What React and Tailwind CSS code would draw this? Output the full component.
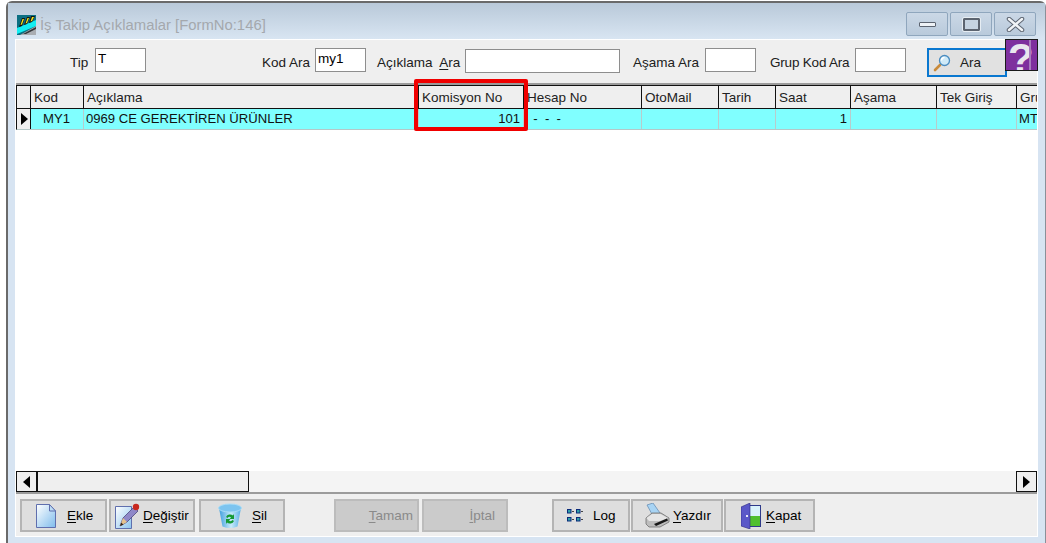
const F = { fontFamily: '"Liberation Sans", sans-serif' };

const cols = [
  ['Kod', 'w-[53px]', 'MY1', 'text-center'],
  ['Açıklama', 'w-[335px]', '0969 CE GEREKTİREN ÜRÜNLER', ''],
  ['Komisyon No', 'w-[105px]', '101', 'text-right'],
  ['Hesap No', 'w-[118px]', '  -  -  -', ''],
  ['OtoMail', 'w-[77px]', '', ''],
  ['Tarih', 'w-[57px]', '', ''],
  ['Saat', 'w-[75px]', '1', 'text-right'],
  ['Aşama', 'w-[86px]', '', ''],
  ['Tek Giriş', 'w-[80px]', '', ''],
  ['Grup', 'w-[60px]', 'MTX', ''],
];

function U({ children }) {
  return <span className="underline underline-offset-2">{children}</span>;
}

function Label({ w, ml, children, cls = '' }) {
  return <span className={`mt-[5px] whitespace-pre leading-[20px] ${w} ${ml} ${cls}`}>{children}</span>;
}

function Field({ w, value, cls = '' }) {
  return (
    <div className={`h-[24px] shrink-0 border border-[#8e8e8e] bg-white pl-[2px] pt-[1px] text-[13.5px] leading-[17px] text-black ${w} ${cls}`}>
      {value}
    </div>
  );
}

function Logo() {
  return (
    <svg width="19" height="20" viewBox="0 0 19 20" className="ml-[1px] mr-[4px] mt-[3px] shrink-0">
      <rect width="19" height="20" fill="#0b6f82" />
      <path d="M0 13 19 5v6L0 19z" fill="#12eef2" />
      <path d="M3 20 19 11v9z" fill="#a9adb2" />
      <path d="M6 19 19 12v2L9 19z" fill="#33363a" />
      <path d="M2 12 5 3h3l-3 8zM7 10l3-8h3l-3 7zM12 8l2-7h4l-3 6z" fill="#141414" />
      <path d="M3.500 10 5.500 4h1.500l-2 5.500zM8.500 8.500 10.500 3H12l-2 5zM13.500 6.500 15 2h2l-2 4z" fill="#f6e81a" />
    </svg>
  );
}

function Mag() {
  return (
    <svg width="18" height="18" viewBox="0 0 18 18" className="shrink-0">
      <path d="M2 16 7 11" stroke="#c98a3a" strokeWidth="2.600" strokeLinecap="round" />
      <circle cx="11.500" cy="6.500" r="5" fill="#cfeaf8" stroke="#4a8cc0" strokeWidth="1.300" />
      <path d="M8.500 6.500a3 3 0 0 1 3-3" stroke="#fff" strokeWidth="1.500" fill="none" />
    </svg>
  );
}

function Page() {
  return (
    <svg width="20" height="24" viewBox="0 0 20 24" className="shrink-0">
      <defs>
        <linearGradient id="pg" x1="0" y1="0" x2="1" y2="1">
          <stop offset="0" stopColor="#ffffff" />
          <stop offset="1" stopColor="#7fbcec" />
        </linearGradient>
      </defs>
      <path d="M.5.500h13l6 6.500v16.500H.5z" fill="url(#pg)" stroke="#5f6fae" />
      <path d="M13.500.500v6.500h6z" fill="#bcdcf5" stroke="#5f6fae" />
    </svg>
  );
}

function Edit() {
  return (
    <svg width="25" height="26" viewBox="0 0 25 26" className="shrink-0">
      <defs>
        <linearGradient id="ed" x1="0" y1="0" x2="1" y2="1">
          <stop offset="0" stopColor="#ffffff" />
          <stop offset="1" stopColor="#8cc4ee" />
        </linearGradient>
      </defs>
      <path d="M.5 3.500h16v22H.5z" fill="url(#ed)" stroke="#5f6fae" />
      <path d="M5 23 8 15 19 4l4 4-11 11z" fill="#8f88c8" stroke="#3f3a70" strokeWidth=".7" />
      <path d="M5 23 8 15l4 4z" fill="#e6c28c" />
      <path d="M5 23 6.300 19.500 8.500 21.700z" fill="#3a2a1a" />
      <circle cx="21" cy="4" r="3.200" fill="#c8281e" />
    </svg>
  );
}

function Bin() {
  return (
    <svg width="24" height="26" viewBox="0 0 24 26" className="shrink-0">
      <defs>
        <linearGradient id="bn" x1="0" y1="0" x2="1" y2="0">
          <stop offset="0" stopColor="#3e9ede" />
          <stop offset=".55" stopColor="#c8eafa" />
          <stop offset="1" stopColor="#5ab0e6" />
        </linearGradient>
      </defs>
      <path d="M1 5 4.500 23.500Q12 26.500 19.500 23.500L23 5z" fill="url(#bn)" />
      <ellipse cx="12" cy="5" rx="11.500" ry="4" fill="#7cc4ef" stroke="#a9dcf6" />
      <path d="M8 14a4.500 4.500 0 0 1 7-1.500l1-1.500v5h-4.500l1.500-1.500a2.500 2.500 0 0 0-3.500.5zM16 18a4.500 4.500 0 0 1-7 1.500l-1 1.500v-5h4.500l-1.500 1.500a2.500 2.500 0 0 0 3.500-.5z" fill="#159a35" />
    </svg>
  );
}

function LogIcon() {
  return (
    <svg width="16" height="13" viewBox="0 0 16 13" className="shrink-0">
      {[[0, 0], [9, 0], [0, 8], [9, 8]].map(([x, y], i) => (
        <g key={i}>
          <rect x={x + 0.5} y={y + 0.5} width="3.500" height="3.500" fill="#2fa0a8" stroke="#0a2a7a" />
          <rect x={x + 5} y={y + 2} width="2" height="1" fill="#444" />
        </g>
      ))}
    </svg>
  );
}

function Printer() {
  return (
    <svg width="25" height="25" viewBox="0 0 25 25" className="shrink-0">
      <path d="M2 2 8 0 15 10 8 13z" fill="#a8d4f4" stroke="#6a8fb5" strokeWidth=".8" />
      <path d="M1 15 7 10h9l8 5v4l-9 5H4l-3-3z" fill="#bdbdbd" stroke="#6e6e6e" strokeWidth=".8" />
      <path d="M1.500 15 7 11h8.500l7.500 4-8 3H4z" fill="#e6e6e6" />
      <path d="M9 21 22 15.500l1 2L11 23z" fill="#181818" />
    </svg>
  );
}

function Door() {
  return (
    <svg width="20" height="26" viewBox="0 0 20 26" className="shrink-0">
      <rect x="7.500" y="2.500" width="12" height="21" fill="#d9f2fb" stroke="#2e3a8a" />
      <rect x="9" y="13" width="10" height="10" fill="#4fbf2e" />
      <path d="M0 4 9 0v26l-9-3z" fill="#5a58c8" stroke="#2e2a80" strokeWidth=".6" />
      <rect x="5" y="12" width="2" height="2" fill="#e8e8f8" />
    </svg>
  );
}

function Btn({ w, icon, children, cls = '', disabled }) {
  return (
    <div
      className={`flex h-[33px] shrink-0 items-center whitespace-nowrap border-2 text-[13.5px] ${w} ${cls} ${
        disabled ? 'justify-end border-[#bcbcbc] bg-[#cbcbcb] text-[#8a8a8a]' : 'border-[#b4b4b4] bg-[#dedede] text-black'
      }`}
    >
      {icon}
      <span className="pt-[1px]">{children}</span>
    </div>
  );
}

function Cap({ kind }) {
  return (
    <div className="flex h-[24px] w-[42px] items-center justify-center rounded-[2px] border border-[#8fa6bd] bg-gradient-to-b from-[#cbd8e6] to-[#b9cadb]">
      {kind === 'min' && <div className="mt-[1px] h-[5px] w-[17px] rounded-[1px] border border-[#5c6470] bg-[#eef2f6]" />}
      {kind === 'max' && (
        <div className="h-[13px] w-[17px] rounded-[1px] border-2 border-[#5c6470] bg-[#c5d3e1] outline outline-1 outline-[#e6edf3]" />
      )}
      {kind === 'close' && (
        <svg width="19" height="15" viewBox="0 0 19 15">
          <path d="M3 2 16 13M16 2 3 13" stroke="#5c6470" strokeWidth="4.500" strokeLinecap="round" />
          <path d="M3 2 16 13M16 2 3 13" stroke="#f1f4f7" strokeWidth="2.500" strokeLinecap="round" />
        </svg>
      )}
    </div>
  );
}

export default function App() {
  return (
    <div style={F} className="h-[543px] w-[1046px] overflow-hidden bg-white pl-[6px] pt-[1px]">
      <div className="flex h-[542px] w-[1040px] flex-col rounded-t-[6px] border-l-2 border-r border-t-2 border-[#6a6a6a] border-r-[#8a9099] bg-[#d7e4f2]">
        <div className="flex h-[36px] items-start bg-gradient-to-b from-[#b9c9d9] to-[#d8e5f2] pl-[8px] pr-[9px] pt-[9px]">
          <Logo />
          <span className="mt-[1px] whitespace-nowrap text-[14.85px] leading-[24px] text-[#a4a8ad]">
            İş Takip Açıklamalar [FormNo:146]
          </span>
          <div className="ml-auto flex gap-[2px]">
            <Cap kind="min" />
            <Cap kind="max" />
            <Cap kind="close" />
          </div>
        </div>

        <div className="ml-[7px] mr-[7px] flex h-[498px] flex-col border border-white bg-[#efefef]">
          <div className="relative flex h-[43px] shrink-0 items-start pt-[8px] text-[13.5px] text-[#202020]">
            <Label w="w-[25px]" ml="ml-[54px]">Tip</Label>
            <Field w="w-[51px]" value="T" />
            <Label w="w-[53px]" ml="ml-[116px]">Kod Ara</Label>
            <Field w="w-[51px]" value="my1" />
            <Label w="w-[88px]" ml="ml-[11px]">
              {'Açıklama  '}<U>A</U>ra
            </Label>
            <Field w="w-[155px]" value="" cls="mt-[1px]" />
            <Label w="w-[72px]" ml="ml-[13px]">Aşama Ara</Label>
            <Field w="w-[51px]" value="" />
            <Label w="w-[85px]" ml="ml-[14px]" cls="tracking-[-0.2px]">Grup Kod Ara</Label>
            <Field w="w-[51px]" value="" />
            <div className="ml-[21px] flex h-[29px] w-[80px] shrink-0 items-center gap-[9px] border-2 border-[#0a78d0] bg-[#e1e1e1] pl-[4px]">
              <Mag />
              <span className="pt-[1px]">Ara</span>
            </div>
            <div className="absolute right-[-1px] top-[-1px] h-[32px] w-[33px] overflow-hidden border border-[#1a1a1a] bg-[#7e2f9e]">
              <span className="-mt-[2px] block pl-[2px] text-[42px] font-bold leading-[42px] text-[#e9e6ee]">?</span>
              <div className="absolute right-[6px] top-0 h-full w-[2px] bg-[#a77bbd]" />
            </div>
          </div>

          <div className="relative flex min-h-0 flex-1 flex-col border-t-2 border-[#9b9b9b] bg-white">
            <div className="flex h-[24px] shrink-0 overflow-hidden border-y border-l border-[#111] bg-[#efefef] pt-[2px] text-[13.5px] leading-[20px] text-[#222]">
              <div className="-mt-[2px] w-[14px] shrink-0 border-r border-[#111]" />
              {cols.map(([h, w]) => (
                <div key={h} className={`${w} -mt-[2px] shrink-0 overflow-hidden whitespace-nowrap border-r border-[#111] pl-[3px] pt-[2px] last:border-r-0`}>
                  {h}
                </div>
              ))}
            </div>
            <div className="flex h-[21px] shrink-0 overflow-hidden border-b border-l border-[#111] border-b-[#b5c8c8] bg-[#80ffff] text-[13.1px] leading-[20px] text-[#111]">
              <div className="flex w-[14px] shrink-0 items-center justify-center border-r border-[#111] bg-[#efefef]">
                <svg width="8" height="12" viewBox="0 0 8 12"><path d="M1 0 8 6 1 12z" fill="#000" /></svg>
              </div>
              {cols.map(([h, w, v, a]) => (
                <div key={h} className={`${w} ${a} shrink-0 overflow-hidden whitespace-pre border-r border-[#b8cccc] pl-[2px] pr-[3px] last:border-r-0`}>
                  {v}
                </div>
              ))}
            </div>
            <div className="flex-1" />
            <div className="flex h-[21px] shrink-0 items-stretch bg-[#f4f4f4] bg-[radial-gradient(#dcdcdc_0.5px,transparent_0.6px)] bg-[length:2px_2px]">
              <div className="flex w-[233px] border border-[#111] bg-[#efefef]">
                <div className="flex w-[21px] items-center justify-center border-r-2 border-[#111]">
                  <svg width="7" height="12" viewBox="0 0 7 12"><path d="M7 0 0 6 7 12z" fill="#000" /></svg>
                </div>
              </div>
              <div className="ml-auto flex w-[21px] items-center justify-center border border-[#111] bg-[#efefef]">
                <svg width="7" height="12" viewBox="0 0 7 12"><path d="M0 0 7 6 0 12z" fill="#000" /></svg>
              </div>
            </div>
            <div className="absolute left-[398px] top-[-6px] h-[52px] w-[114px] rounded-[2px] border-[4px] border-[#f00000]" />
          </div>

          <div className="flex h-[44px] shrink-0 items-start border-t-2 border-[#9b9b9b] pl-[4px] pt-[5px]">
            <Btn w="w-[87px]" icon={<Page />} cls="gap-[11px] pl-[14px]"><U>E</U>kle</Btn>
            <Btn w="w-[86px]" icon={<Edit />} cls="ml-[2px] gap-[3px] pl-[4px]"><U>D</U>eğiştir</Btn>
            <Btn w="w-[86px]" icon={<Bin />} cls="ml-[4px] gap-[10px] pl-[17px]"><U>S</U>il</Btn>
            <Btn w="w-[85px]" disabled cls="ml-[49px] pr-[4px]"><U>T</U>amam</Btn>
            <Btn w="w-[86px]" disabled cls="ml-[3px] pr-[11px]"><U>İ</U>ptal</Btn>
            <Btn w="w-[78px]" icon={<LogIcon />} cls="ml-[44px] gap-[10px] pl-[13px]">Log</Btn>
            <Btn w="w-[92px]" icon={<Printer />} cls="ml-[1px] gap-[3px] pl-[12px]"><U>Y</U>azdır</Btn>
            <Btn w="w-[91px]" icon={<Door />} cls="ml-[1px] gap-[5px] pl-[15px]"><U>K</U>apat</Btn>
          </div>
        </div>
      </div>
    </div>
  );
}
